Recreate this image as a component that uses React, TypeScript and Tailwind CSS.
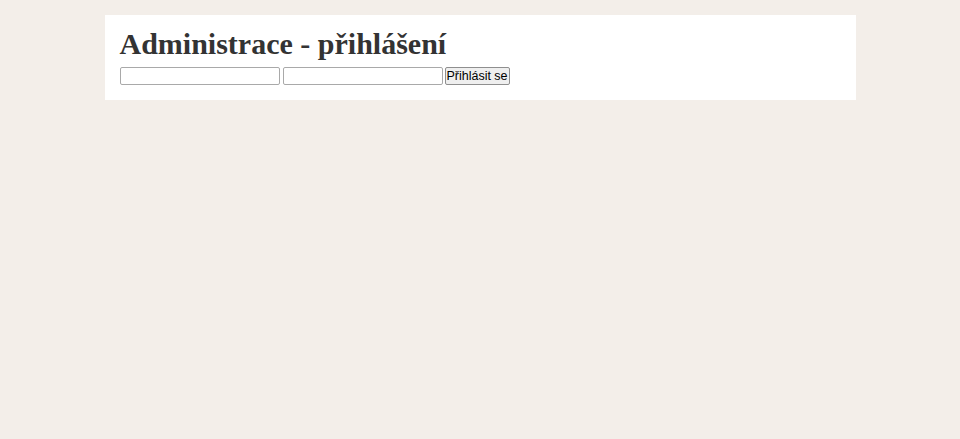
import React from 'react';

export default function App() {
  return (
    <div className="min-h-[439px] bg-[#f3eee9] pt-[15px]">
      {/* Login panel */}
      <div className="mx-auto w-[751px] bg-white px-[15px] pt-[10px] pb-[15px] text-[#333333]">
        <h1 className="mb-[5px] font-['Liberation_Serif',serif] text-[30px] font-bold leading-[37px]">
          Administrace - přihlášení
        </h1>
        <form className="flex items-center gap-[3px] font-['Liberation_Sans',Arial,sans-serif] text-[13.33px]">
          <input
            type="text"
            className="h-[18px] w-[160px] rounded-[2px] border border-[#a9a9a9] bg-white px-[2px] text-black"
          />
          <input
            type="password"
            className="h-[18px] w-[160px] rounded-[2px] border border-[#a9a9a9] bg-white px-[2px] text-black"
          />
          <button
            type="button"
            className="-ml-[1px] h-[18px] w-[65px] rounded-[2px] border border-[#8f8f8f] bg-[#efefef] text-[12.5px] leading-[14px] text-black"
          >
            Přihlásit se
          </button>
        </form>
      </div>
    </div>
  );
}
